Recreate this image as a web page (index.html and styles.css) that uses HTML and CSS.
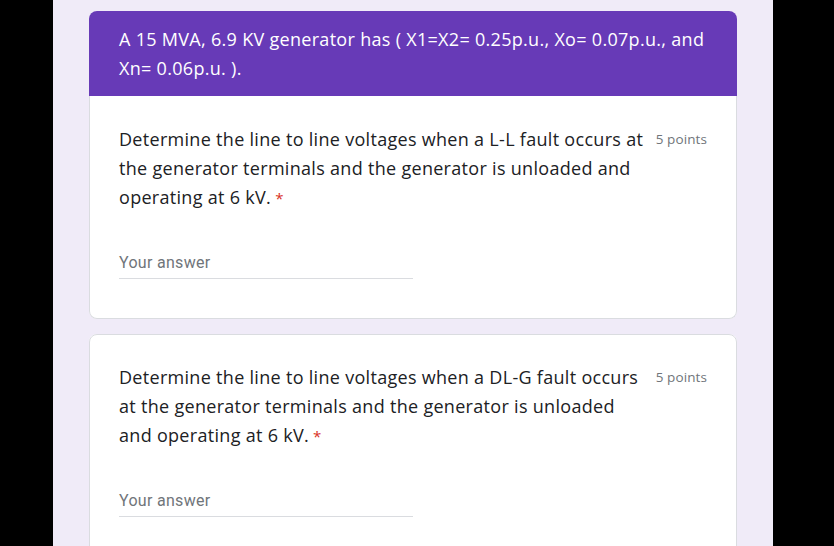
FILE: index.html
```html
<!DOCTYPE html>
<html>
<head>
<meta charset="utf-8">
<link rel="stylesheet" href="styles.css">
</head>
<body>
<div class="page">
  <div class="card first">
    <div class="card-header">A 15 MVA, 6.9 KV generator has ( X1=X2= 0.25p.u., Xo= 0.07p.u., and Xn= 0.06p.u. ).</div>
    <div class="card-body">
      <div class="question">
        <div class="title">Determine the line to line voltages when a L-L fault occurs at the generator terminals and the generator is unloaded and operating at 6 kV.<span class="req">*</span></div>
        <div class="points">5 points</div>
      </div>
      <div class="answer">Your answer</div>
    </div>
  </div>
  <div class="card second">
    <div class="card-body">
      <div class="question">
        <div class="title">Determine the line to line voltages when a DL-G fault occurs at the generator terminals and the generator is unloaded and operating at 6 kV.<span class="req">*</span></div>
        <div class="points">5 points</div>
      </div>
      <div class="answer">Your answer</div>
    </div>
  </div>
</div>
</body>
</html>
```
FILE: styles.css
```css
html, body {
  margin: 0;
  padding: 0;
  background: #000;
  height: 546px;
  overflow: hidden;
}
.page {
  margin-left: 53px;
  width: 720px;
  height: 546px;
  background: #f0ebf8;
  padding-top: 11px;
  box-sizing: border-box;
  font-family: "Open Sans", sans-serif;
  color: #202124;
}
.card {
  margin-left: 36px;
  width: 648px;
  border-radius: 8px;
  background: #fff;
}
.second {
  margin-top: 15px;
}
.card-header {
  background: #673ab7;
  color: #fff;
  border-radius: 8px 8px 0 0;
  padding: 14px 24px 13px 30px;
  font-size: 18px;
  letter-spacing: 0.3px;
  line-height: 29px;
}
.card-body {
  border: 1px solid #dadce0;
  border-radius: 0 0 8px 8px;
  padding: 28px 29px 39px 29px;
}
.second .card-body {
  border-radius: 8px;
}
.first .card-body {
  border-top: none;
  padding-top: 29px;
}
.question {
  display: flex;
  align-items: flex-start;
}
.title {
  flex: 1;
  font-size: 18px;
  letter-spacing: 0.3px;
  line-height: 29px;
}
.req {
  color: #d93025;
  font-size: 15px;
  margin-left: 4px;
}
.points {
  flex-shrink: 0;
  margin-left: 8px;
  margin-top: 6px;
  font-size: 13.5px;
  letter-spacing: 0.1px;
  color: #70757a;
  line-height: 16px;
}
.answer {
  margin-top: 40px;
  width: 294px;
  border-bottom: 1px solid #dadce0;
  padding-bottom: 5px;
  font-family: Roboto, sans-serif;
  font-size: 16px;
  line-height: 20px;
  color: #70757a;
  letter-spacing: 0.3px;
}
```
